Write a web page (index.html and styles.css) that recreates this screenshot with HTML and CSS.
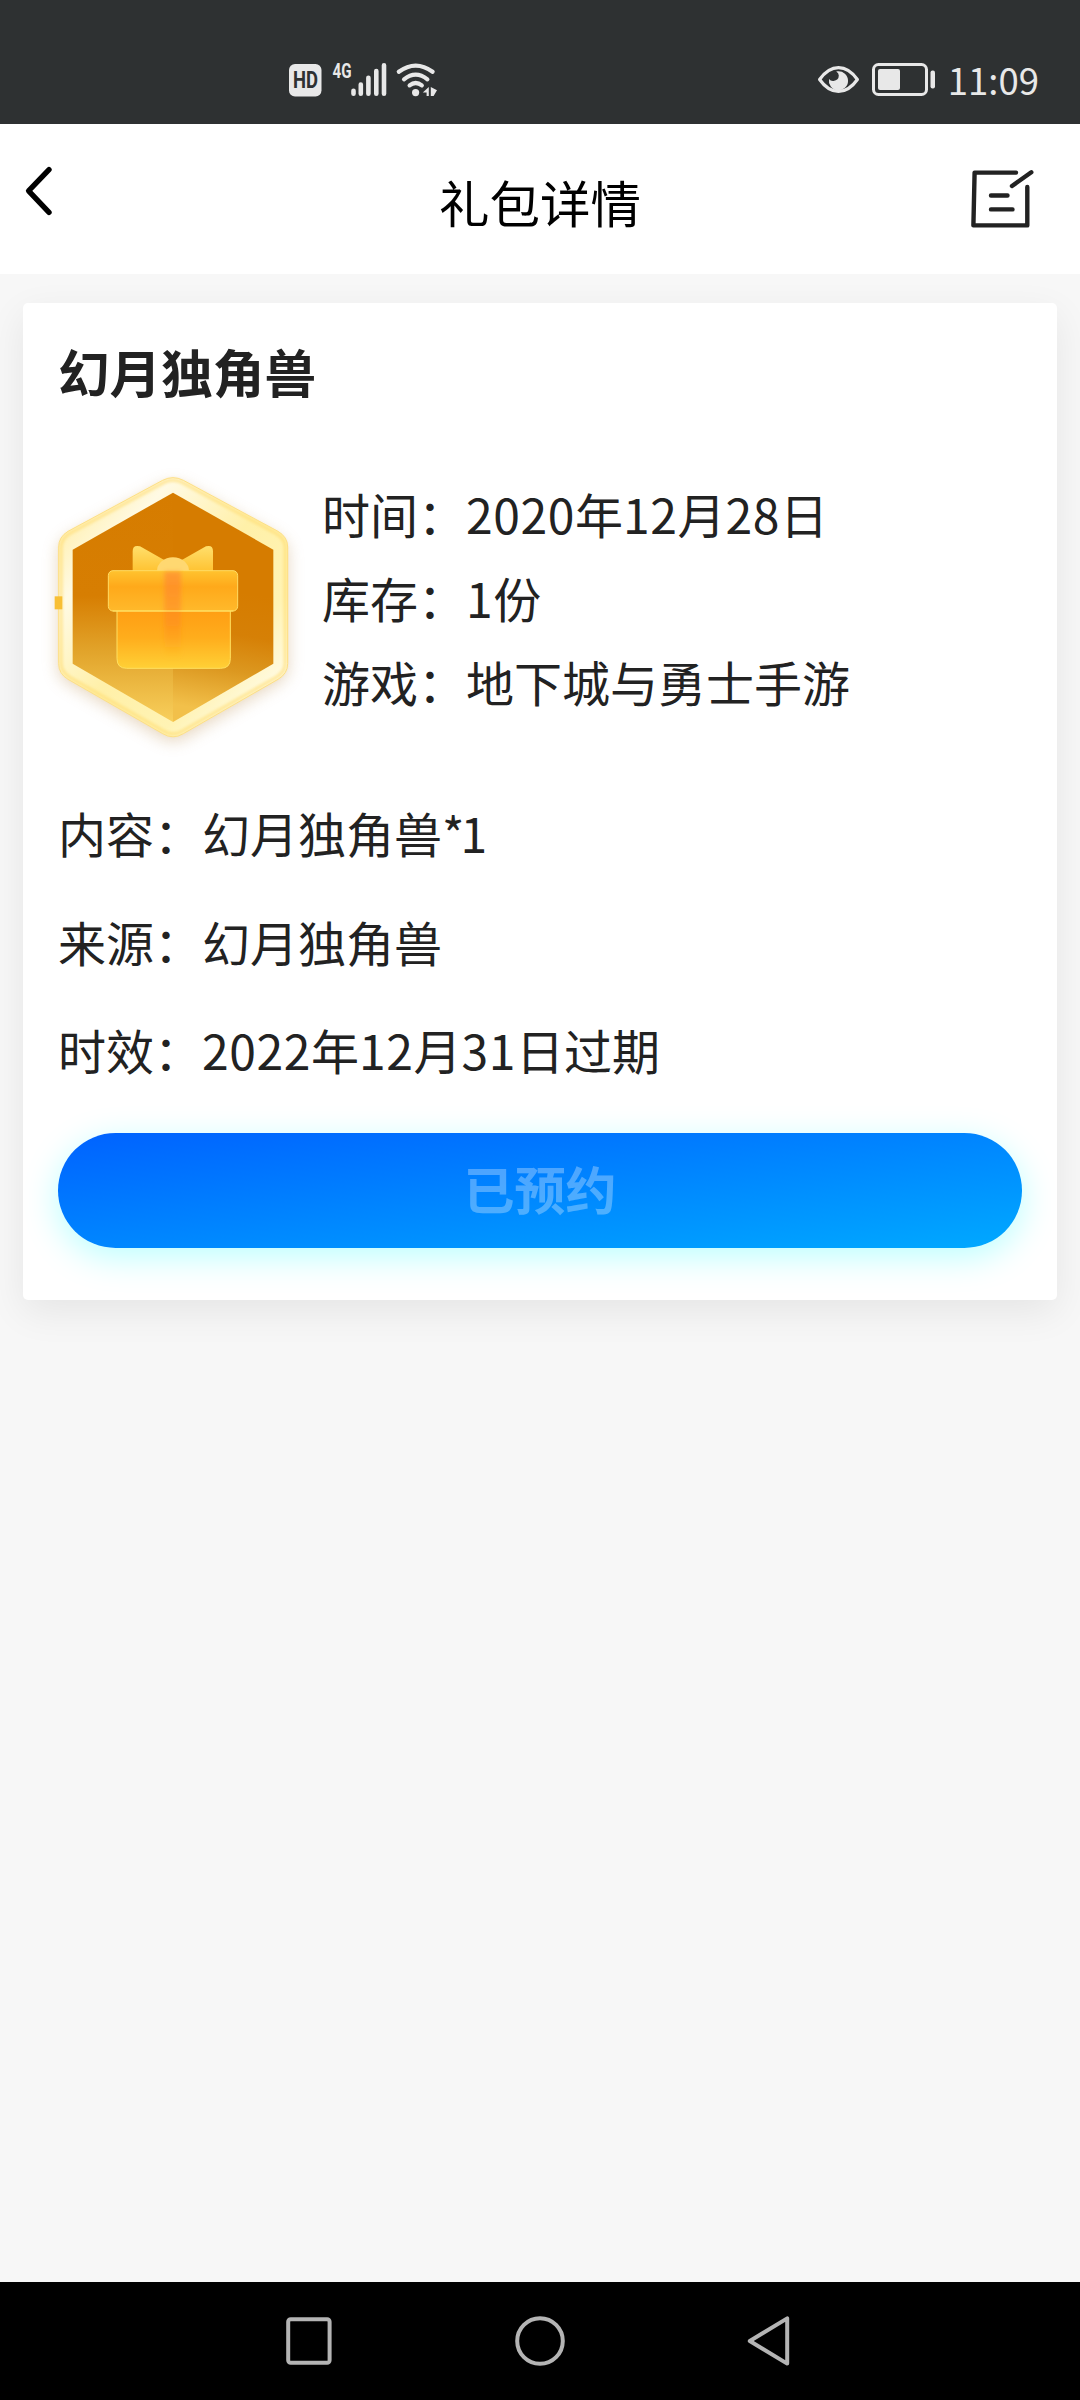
FILE: index.html
```html
<!DOCTYPE html>
<html lang="zh-CN">
<head>
<meta charset="utf-8">
<title>礼包详情</title>
<link rel="stylesheet" href="styles.css">
</head>
<body>
<div class="screen">
  <div class="status">
    <svg class="status-left" width="150" height="36" viewBox="288 62 150 36">
      <rect x="289" y="64" width="32.5" height="32.5" rx="6" fill="#e8e8e8"/>
      <text x="293" y="88" class="hd" textLength="25" lengthAdjust="spacingAndGlyphs">HD</text>
      <text x="332.5" y="78" class="net" textLength="19" lengthAdjust="spacingAndGlyphs">4G</text>
      <path d="M353.5 90.8V93.8M360.8 84.5V93.8M368.4 77.8V93.8M376.3 71V93.8M384 65.2V93.8" stroke="#e8e8e8" stroke-width="4.6" stroke-linecap="round"/>
      <g fill="none" stroke="#e8e8e8" stroke-width="4.2" stroke-linecap="round">
        <path d="M398.8 71.8Q415.7 59.3 432.6 71.8"/>
        <path d="M404 79.3Q415.7 70 427.4 79.3"/>
        <path d="M409.6 85.4Q415.7 80.6 421.8 85.4"/>
      </g>
      <circle cx="415.6" cy="92.6" r="3.6" fill="#e8e8e8"/>
      <path d="M428.8 87V96H426.6V92.5H422.8ZM430.8 87L437 90.2L433.6 96H430.8Z" fill="#e8e8e8"/>
    </svg>
    <svg class="status-right" width="122" height="36" viewBox="816 62 122 36">
      <path d="M819.6 79.5Q828 67.6 838.5 67.6T857.4 79.5Q849 91.4 838.5 91.4T819.6 79.5Z" fill="none" stroke="#e8e8e8" stroke-width="3.2" stroke-linejoin="round"/>
      <path d="M837.5 71.2A9.6 9.6 0 1 1 829 79Q830.5 81.2 833.5 81Q838.8 80 838.8 75.5Q838.8 73 836.2 71.4Z" fill="#e8e8e8"/>
      <rect x="873.5" y="64.5" width="53" height="30" rx="5" fill="none" stroke="#e8e8e8" stroke-width="3"/>
      <rect x="878" y="69" width="22" height="21" rx="2" fill="#e8e8e8"/>
      <rect x="930.5" y="70.5" width="4.5" height="18" rx="2" fill="#e8e8e8"/>
    </svg>
    <span class="clock">11:09</span>
  </div>

  <header class="header">
    <svg class="back" width="32" height="52" viewBox="23 165 32 52">
      <path d="M49 169.7L28.6 190.8L49 212.3" fill="none" stroke="#000" stroke-width="5.4" stroke-linecap="round" stroke-linejoin="round"/>
    </svg>
    <h1 class="header-title">礼包详情</h1>
    <svg class="edit" width="64" height="62" viewBox="970 168 64 62">
      <path d="M1016 172.6H974.6L973.4 225.4H1027.3V187M1012 186L1031.3 172.2M991 195.5H1007.5M991 209.4H1012.5" fill="none" stroke="#222" stroke-width="4.4" stroke-linecap="round" stroke-linejoin="round"/>
    </svg>
  </header>

  <main class="content">
    <section class="card">
      <h2 class="card-title">幻月独角兽</h2>
      <div class="summary">
        <svg class="badge" width="230" height="260" viewBox="84 80 690 780">
          <defs>
            <linearGradient id="rim" x1="0" y1="0" x2="1" y2="1">
              <stop offset="0" stop-color="#ffe98f"/><stop offset=".25" stop-color="#fffae4"/>
              <stop offset=".5" stop-color="#fff0a8"/><stop offset=".72" stop-color="#fff3b4"/><stop offset=".86" stop-color="#fffadf"/><stop offset="1" stop-color="#ffe880"/>
            </linearGradient>
            <linearGradient id="left" x1="0" y1="0" x2="0" y2="1">
              <stop offset="0" stop-color="#d67c00"/><stop offset=".45" stop-color="#d77e02"/><stop offset=".7" stop-color="#e2a52c"/><stop offset="1" stop-color="#f8cf5c"/>
            </linearGradient>
            <linearGradient id="right" gradientUnits="userSpaceOnUse" x1="600" y1="420" x2="540" y2="780">
              <stop offset="0" stop-color="#d67c00"/><stop offset=".35" stop-color="#d68006"/><stop offset=".65" stop-color="#dc9820"/><stop offset="1" stop-color="#f2c04a"/>
            </linearGradient>
            <linearGradient id="lid" x1="0" y1="0" x2="0" y2="1">
              <stop offset="0" stop-color="#ffc32f"/><stop offset=".4" stop-color="#ffa91a"/><stop offset="1" stop-color="#ffb92b"/>
            </linearGradient>
            <linearGradient id="box" x1="0" y1="0" x2="0" y2="1">
              <stop offset="0" stop-color="#ff9c12"/><stop offset=".5" stop-color="#ffad1c"/><stop offset="1" stop-color="#ffd036"/>
            </linearGradient>
            <linearGradient id="bow" x1="0" y1="0" x2="0" y2="1">
              <stop offset="0" stop-color="#ffdf6c"/><stop offset="1" stop-color="#ffc02c"/>
            </linearGradient>
            <linearGradient id="ribbon" x1="0" y1="0" x2="0" y2="1">
              <stop offset="0" stop-color="#ff8238" stop-opacity=".6"/><stop offset=".6" stop-color="#ff8420" stop-opacity=".45"/><stop offset="1" stop-color="#ffa020" stop-opacity="0"/>
            </linearGradient>
            <filter id="glow" x="-20%" y="-20%" width="140%" height="140%"><feGaussianBlur stdDeviation="24"/></filter>
            <filter id="soft" x="-50%" y="-10%" width="200%" height="120%"><feGaussianBlur stdDeviation="7"/></filter>
            <filter id="edge" x="-5%" y="-5%" width="110%" height="110%"><feGaussianBlur stdDeviation="5"/></filter>
          </defs>
          <path d="M390 110Q429 90 468 110L746 262Q774 280 774 310V650Q774 680 746 697L468 860Q429 885 390 860L112 697Q84 680 84 650V310Q84 280 112 262Z" fill="#b98a4c" opacity=".34" filter="url(#glow)"/>
          <path d="M398 90Q429 74 460 90L744 243Q773 260 773 290V640Q773 670 744 687L460 850Q429 869 398 850L114 687Q86 670 86 640V290Q86 260 114 243Z" fill="url(#rim)" stroke="#fde08a" stroke-width="3"/>
          <path d="M402 96Q429 82 456 96L738 249Q766 265 766 292V638Q766 664 739 681L456 843Q429 859 402 843L119 681Q93 664 93 638V292Q93 265 119 249Z" fill="none" stroke="#ffdc70" stroke-width="10" opacity=".65" filter="url(#edge)"/>
          <path d="M429 127L128 298V640L429 815Z" fill="url(#left)"/>
          <path d="M429 127L730 298V640L429 815Z" fill="url(#right)"/>
          <rect x="74" y="438" width="23" height="39" fill="#f8bf34"/>
          <path d="M308 370V303Q308 282 330 288L429 344L528 288Q549 282 549 303V370Z" fill="url(#bow)"/>
          <ellipse cx="429" cy="362" rx="48" ry="41" fill="#ffd871"/>
          <path d="M261 470H601V625Q601 654 572 654H290Q261 654 261 625Z" fill="url(#box)" stroke="#ffe060" stroke-width="3"/>
          <rect x="235" y="361" width="388" height="121" rx="14" fill="url(#lid)" stroke="#ffdc64" stroke-width="3"/>
          <rect x="403" y="364" width="50" height="260" fill="url(#ribbon)" filter="url(#soft)"/>
          <path d="M248 482H610" stroke="#ffe466" stroke-width="3"/>
        </svg>
        <dl class="facts">
          <div class="fact"><dt>时间：</dt><dd><span class="num">2020</span>年<span class="num">12</span>月<span class="num">28</span>日</dd></div>
          <div class="fact"><dt>库存：</dt><dd><span class="num">1</span>份</dd></div>
          <div class="fact"><dt>游戏：</dt><dd>地下城与勇士手游</dd></div>
        </dl>
      </div>
      <dl class="details">
        <div class="detail"><dt>内容：</dt><dd>幻月独角兽<span class="star">*</span><span class="num">1</span></dd></div>
        <div class="detail"><dt>来源：</dt><dd>幻月独角兽</dd></div>
        <div class="detail"><dt>时效：</dt><dd><span class="num">2022</span>年<span class="num">12</span>月<span class="num">31</span>日过期</dd></div>
      </dl>
      <button class="reserve" disabled>已预约</button>
    </section>
  </main>

  <nav class="navbar">
    <svg width="46" height="50" viewBox="0 0 46 50"><rect x="2.2" y="3.2" width="41.4" height="43.6" rx="2.5" fill="none" stroke="#b4b4b4" stroke-width="4"/></svg>
    <svg width="50" height="50" viewBox="0 0 50 50"><circle cx="25" cy="25" r="22.8" fill="none" stroke="#b4b4b4" stroke-width="4"/></svg>
    <svg width="44" height="50" viewBox="0 0 44 50"><path d="M2.8 25L40.2 2.4V47.6Z" fill="none" stroke="#b4b4b4" stroke-width="4" stroke-linejoin="round"/></svg>
  </nav>
</div>
</body>
</html>
```
FILE: styles.css
```css
* { box-sizing: border-box; }
body {
  margin: 0;
  font-family: "Noto Sans CJK SC", sans-serif;
  color: #222;
}
svg { display: block; flex: none; }
h1, h2, dl, dd { margin: 0; }

.screen {
  width: 1080px;
  height: 2400px;
  display: flex;
  flex-direction: column;
  background: #f7f7f7;
}

.status {
  height: 124px;
  padding: 62px 41px 0 288px;
  display: flex;
  align-items: flex-start;
  background: #2e3132;
}
.status-left { overflow: visible; }
.status-right { margin-left: auto; }
.hd {
  font: 700 23px Roboto, sans-serif;
  fill: #2e3132;
}
.net {
  font: 700 20px Roboto, sans-serif;
  fill: #e8e8e8;
}
.clock {
  margin-left: 10px;
  font-size: 36.5px;
  line-height: 36px;
  color: #e8e8e8;
}

.header {
  height: 150px;
  padding: 0 46px 0 23px;
  display: grid;
  grid-template-columns: 96px 1fr 73px;
  background: #fff;
}
.back { margin-top: 41px; }
.edit { margin-top: 44px; justify-self: end; }
.header-title {
  font-size: 50.5px;
  font-weight: 400;
  line-height: 76px;
  margin-top: 39px;
  text-align: center;
  color: #000;
}

.content {
  flex: 1;
  padding: 29px 23px 0;
}
.card {
  height: 997px;
  padding: 35px 35px 0;
  border-radius: 5px;
  background: #fff;
  box-shadow: 0 12px 38px rgba(0, 0, 0, .075);
}
.card-title {
  font-size: 51.6px;
  font-weight: 700;
  line-height: 66px;
}
.summary {
  margin-top: 73px;
  display: flex;
  align-items: flex-start;
  gap: 34px;
}
.badge { overflow: visible; }
.facts { margin-top: -6px; }
.fact, .detail {
  display: flex;
  font-size: 48px;
  line-height: 84px;
  white-space: nowrap;
}
.details { margin-top: 41px; }
.detail { line-height: 108.7px; }
.num { letter-spacing: .6px; }
.star { letter-spacing: -4px; }

.reserve {
  display: block;
  width: 100%;
  height: 115px;
  margin-top: 29px;
  padding: 0 0 5px;
  border: 0;
  border-radius: 58px;
  font-family: inherit;
  font-size: 51px;
  font-weight: 700;
  line-height: 110px;
  color: rgba(255, 255, 255, .3);
  background: linear-gradient(to bottom right, #0062ff, #00a9ff);
  box-shadow: 0 9px 34px rgba(0, 255, 255, .27);
}

.navbar {
  height: 118px;
  padding: 34px 289px 34px 286px;
  display: flex;
  justify-content: space-between;
  background: #000;
}
```
